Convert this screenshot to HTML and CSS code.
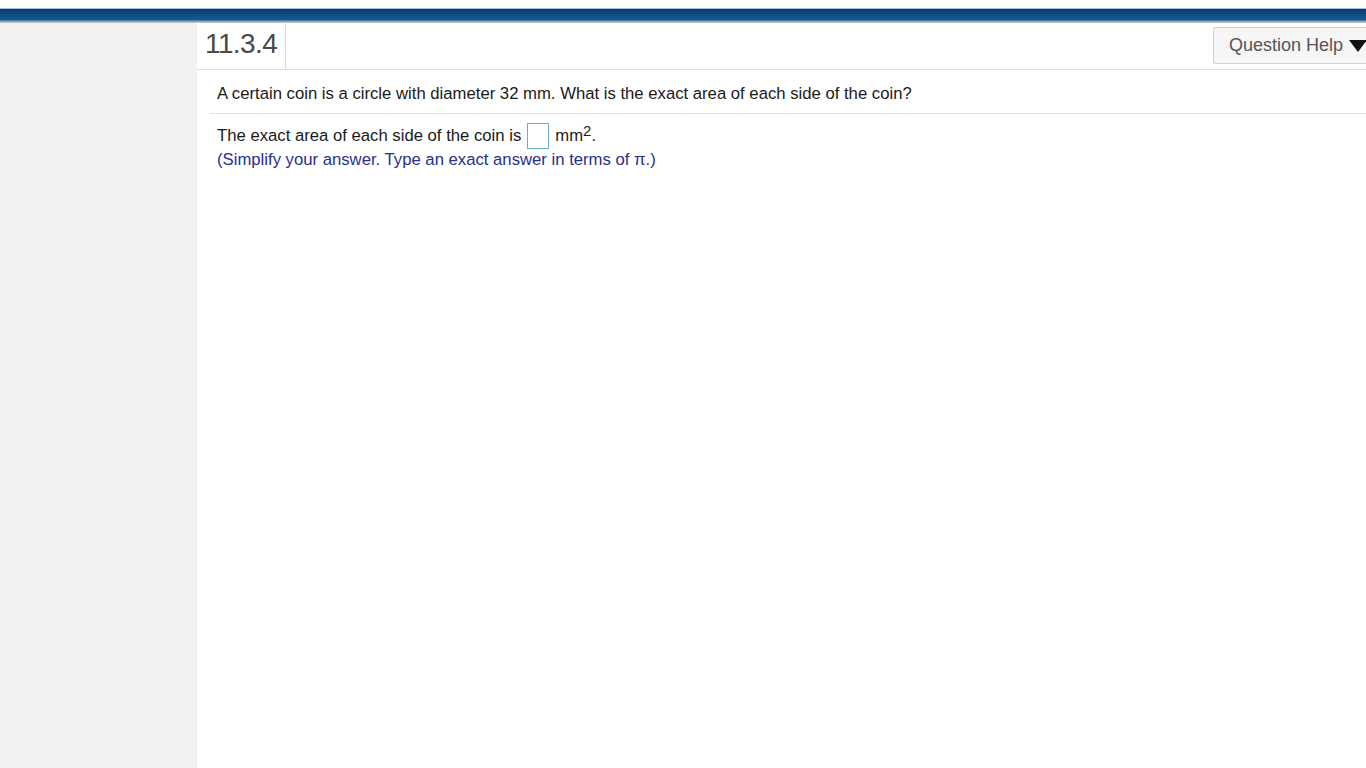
FILE: index.html
```html
<!DOCTYPE html>
<html>
<head>
<meta charset="utf-8">
<link rel="stylesheet" href="styles.css">
</head>
<body>
<div class="topbar"></div>
<div class="main">
  <aside class="side"></aside>
  <section class="content">
    <div class="header">
      <div class="qnum">11.3.4</div>
      <div class="spacer"></div>
      <button class="help">Question Help <svg class="tri" width="18" height="13" viewBox="0 0 18 13"><polygon points="0,1 18,1 9,13" fill="#111"/></svg></button>
    </div>
    <div class="question">A certain coin is a circle with diameter 32 mm. What is the exact area of each side of the coin?</div>
    <div class="answer">
      <div class="line">The exact area of each side of the coin is<span class="box"></span>mm<sup>2</sup>.</div>
      <div class="hint">(Simplify your answer. Type an exact answer in terms of π.)</div>
    </div>
  </section>
</div>
</body>
</html>
```
FILE: styles.css
```css
html, body { margin: 0; padding: 0; }
body {
  font-family: "Liberation Sans", Arial, sans-serif;
  background: #fff;
  width: 1366px;
  height: 768px;
  overflow: hidden;
}
.topbar {
  margin-top: 8px;
  height: 15px;
  background: linear-gradient(#0b3a63 0%, #0f4d82 40%, #115a96 75%, #8c9cab 88%, #d6d4d0 100%);
  border-top: 1px solid #9fc0dc;
  box-sizing: border-box;
}
.main {
  display: flex;
  height: 745px;
}
.side {
  width: 197px;
  background: #f2f2f2;
  flex: none;
}
.content {
  flex: 1;
  background: #fff;
  display: flex;
  flex-direction: column;
}
.header {
  display: flex;
  height: 47px;
  border-bottom: 1px solid #dcdcdc;
  box-sizing: border-box;
  align-items: stretch;
}
.qnum {
  width: 89px;
  box-sizing: border-box;
  border-right: 1px solid #dcdcdc;
  font-size: 28px;
  color: #4a4a4a;
  padding-left: 8px;
  padding-top: 5px;
  letter-spacing: -0.6px;
}
.spacer { flex: 1; }
.help {
  align-self: flex-start;
  margin-top: 4px;
  height: 37px;
  width: 153px;
  box-sizing: border-box;
  border: 1px solid #d0d0d0;
  border-right: none;
  border-radius: 3px 0 0 3px;
  background: #f6f6f6;
  font-family: "Liberation Sans", Arial, sans-serif;
  font-size: 18px;
  color: #555;
  text-align: left;
  padding: 0 0 0 15px;
  white-space: nowrap;
  display: flex;
  align-items: center;
}
.tri { margin-left: 6px; flex: none; }
.question {
  margin-left: 13px;
  padding: 14px 0 9px 7px;
  border-bottom: 1px solid #dde0e8;
  font-size: 16.7px;
  color: #1a1a1a;
}
.answer {
  padding: 8px 0 0 20px;
  font-size: 16.7px;
  color: #1a1a1a;
}
.line { height: 27px; display: flex; align-items: center; white-space: pre; }
.box {
  display: inline-block;
  width: 20px;
  height: 24px;
  border: 1px solid #6cb0c8;
  margin: 0 6px 0 6px;
}
.line sup { font-size: 15px; position: relative; top: -5px; vertical-align: 0; line-height: 0; }
.hint {
  color: #26308e;
  line-height: 21px;
}
```
